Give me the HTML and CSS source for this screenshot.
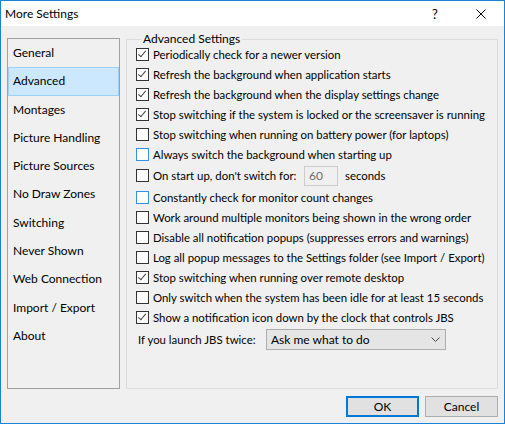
FILE: index.html
```html
<!DOCTYPE html>
<html lang="en">
  <head>
    <meta charset="UTF-8" />
    <meta name="viewport" content="width=device-width, initial-scale=1.0" />
    <title>More Settings</title>
    <link rel="stylesheet" href="styles.css">
  </head>
  <body>
    <div class="window">
      <div class="title-bar">
        <span class="title">More Settings</span>
        <div class="caption-buttons">
          <span class="caption-btn help">?</span>
          <span class="caption-btn close">
            <svg width="10" height="10" viewBox="0 0 10 10">
              <path d="M0.5 0.5 L9.5 9.5 M9.5 0.5 L0.5 9.5" stroke="#000" stroke-width="1" fill="none" />
            </svg>
          </span>
        </div>
      </div>

      <div class="client">
        <div class="panels">
          <ul class="page-list">
            <li>General</li>
            <li class="selected">Advanced</li>
            <li>Montages</li>
            <li>Picture Handling</li>
            <li>Picture Sources</li>
            <li>No Draw Zones</li>
            <li>Switching</li>
            <li>Never Shown</li>
            <li>Web Connection</li>
            <li>Import / Export</li>
            <li>About</li>
          </ul>

          <fieldset class="group">
            <legend>Advanced Settings</legend>
            <div class="options">
              <label class="option"><span class="box checked"></span>Periodically check for a newer version</label>
              <label class="option"><span class="box checked"></span>Refresh the background when application starts</label>
              <label class="option"><span class="box checked"></span>Refresh the background when the display settings change</label>
              <label class="option"><span class="box checked"></span>Stop switching if the system is locked or the screensaver is running</label>
              <label class="option"><span class="box"></span>Stop switching when running on battery power (for laptops)</label>
              <label class="option"><span class="box focus"></span>Always switch the background when starting up</label>
              <label class="option tall">
                <span class="box"></span>
                <span class="delay-text">On start up, don't switch for:</span>
                <span class="num-field">60</span>
                <span class="unit">seconds</span>
              </label>
              <label class="option taller"><span class="box focus"></span>Constantly check for monitor count changes</label>
              <label class="option"><span class="box"></span>Work around multiple monitors being shown in the wrong order</label>
              <label class="option"><span class="box"></span>Disable all notification popups (suppresses errors and warnings)</label>
              <label class="option"><span class="box"></span>Log all popup messages to the Settings folder (see Import / Export)</label>
              <label class="option"><span class="box checked"></span>Stop switching when running over remote desktop</label>
              <label class="option"><span class="box"></span>Only switch when the system has been idle for at least 15 seconds</label>
              <label class="option"><span class="box checked"></span>Show a notification icon down by the clock that controls JBS</label>
            </div>

            <div class="launch-row">
              <span class="launch-label">If you launch JBS twice:</span>
              <div class="combo">
                <span>Ask me what to do</span>
                <svg class="chevron" width="9" height="5" viewBox="0 0 9 5">
                  <path d="M0.5 0.5 L4.5 4.5 L8.5 0.5" stroke="#444" stroke-width="1" fill="none" />
                </svg>
              </div>
            </div>
          </fieldset>
        </div>

        <div class="dialog-buttons">
          <button class="btn default">OK</button>
          <button class="btn">Cancel</button>
        </div>
      </div>
    </div>
  </body>
</html>
```

FILE: styles.css
```css
body {
  margin: 0;
  padding: 0;
  font-family: Lato, "Noto Sans", sans-serif;
  font-size: 12px;
  color: #000;
  background: #fff;
}

.window {
  width: 505px;
  height: 424px;
  box-sizing: border-box;
  border: 1px solid #1883d7;
  display: flex;
  flex-direction: column;
  background: #f0f0f0;
}

/* title bar */
.title-bar {
  height: 25px;
  flex-shrink: 0;
  display: flex;
  align-items: center;
  justify-content: space-between;
  background: #fff;
}

.title {
  padding-left: 4px;
  font-size: 12px;
}

.caption-buttons {
  display: flex;
  height: 100%;
}

.caption-btn {
  width: 46px;
  height: 100%;
  display: flex;
  align-items: center;
  justify-content: center;
}

.caption-btn.help {
  font-size: 13px;
}

/* client area */
.client {
  flex-grow: 1;
  display: flex;
  flex-direction: column;
  padding: 7px 6px 6px 6px;
}

.panels {
  display: grid;
  grid-template-columns: 113px 1fr;
  column-gap: 6px;
  height: 356px;
}

.page-list {
  list-style: none;
  margin: 5px 0 0 0;
  padding: 0;
  border: 1px solid #a0a0a0;
  background: #f0f0f0;
}

.page-list li {
  height: 28.3px;
  line-height: 28px;
  padding-left: 5px;
  box-sizing: border-box;
}

.page-list li.selected {
  background: #cce8ff;
  border: 1px solid #99d1ff;
  padding-left: 4px;
  line-height: 26px;
}

.group {
  margin: 0;
  padding: 0 0 0 9px;
  border: 1px solid #dcdcdc;
  min-width: 0;
  font-size: 11.4px;
}

.group legend {
  margin-left: 5px;
  padding: 0 2px;
  line-height: 12px;
  font-size: 12px;
}

.options {
  display: flex;
  flex-direction: column;
  margin-top: -0.5px;
}

.option {
  display: flex;
  align-items: center;
  height: 20px;
  white-space: nowrap;
}

.option.tall {
  height: 22px;
}

.option.taller {
  height: 21px;
}

.box {
  width: 13px;
  height: 13px;
  box-sizing: border-box;
  border: 1px solid #333;
  background: #fff;
  margin-right: 4px;
  flex-shrink: 0;
  position: relative;
}

.box.focus {
  border-color: #3391e8;
}

/* check mark */
.box.checked::after {
  content: "";
  position: absolute;
  left: 3px;
  top: 0px;
  width: 3px;
  height: 7px;
  border-right: 1px solid #444;
  border-bottom: 1px solid #444;
  transform: rotate(40deg);
}

.delay-text {
  width: 151px;
}

.num-field {
  width: 34px;
  height: 20px;
  box-sizing: border-box;
  border: 1px solid #ccc;
  color: #6d6d6d;
  padding-left: 4px;
  line-height: 18px;
  font-size: 12px;
}

.unit {
  margin-left: 7px;
}

.launch-row {
  display: flex;
  align-items: center;
  margin-top: 1.5px;
  padding-left: 2px;
  white-space: nowrap;
}

.launch-label {
  width: 128px;
  flex-shrink: 0;
}

.combo {
  width: 180px;
  height: 21px;
  box-sizing: border-box;
  border: 1px solid #adadad;
  background: #e5e5e5;
  display: flex;
  align-items: center;
  justify-content: space-between;
  padding: 0 5px 0 4px;
  font-size: 12px;
}

/* OK / Cancel */
.dialog-buttons {
  display: flex;
  justify-content: flex-end;
  gap: 6px;
  margin-top: 7px;
}

.btn {
  width: 73px;
  height: 21px;
  box-sizing: border-box;
  border: 1px solid #adadad;
  background: #e1e1e1;
  font-family: inherit;
  font-size: 12px;
  color: #000;
  padding: 0;
}

.btn.default {
  border: 2px solid #0078d7;
}
```
